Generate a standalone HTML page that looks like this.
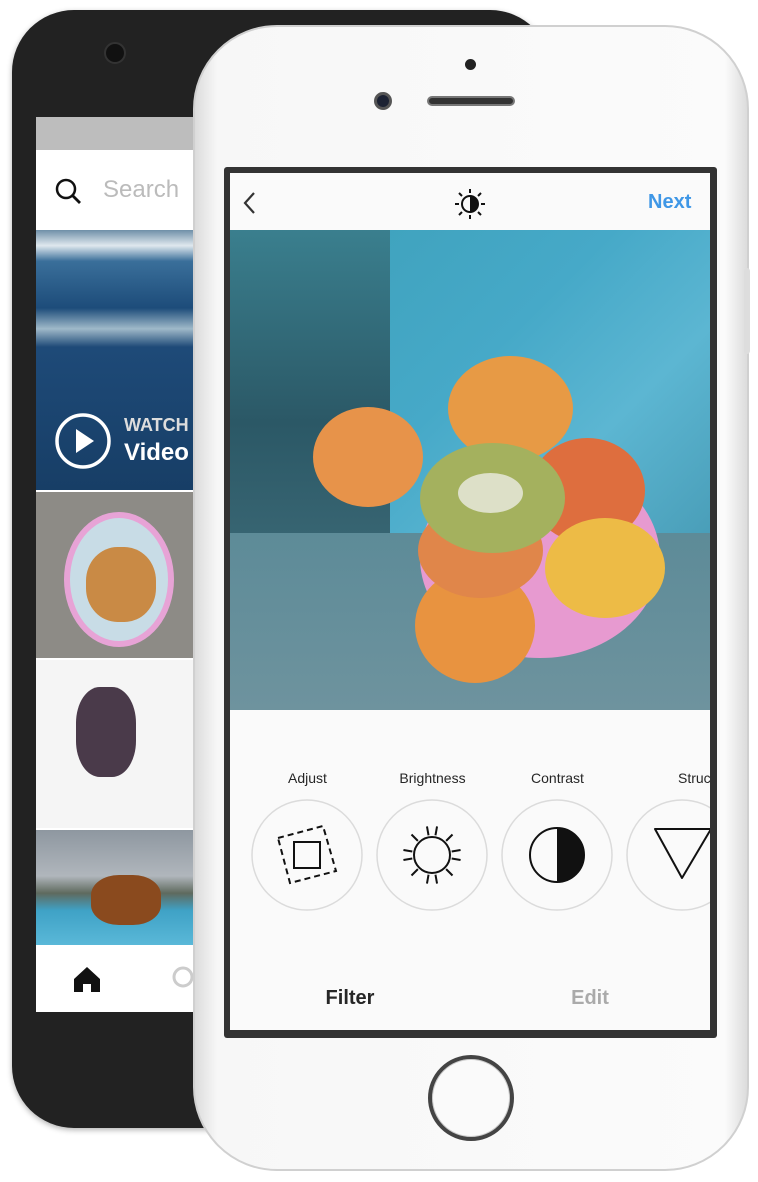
<!DOCTYPE html>
<html><head><meta charset="utf-8"><style>
*{margin:0;padding:0;box-sizing:border-box}
body{width:758px;height:1182px;background:#fff;position:relative;overflow:hidden;font-family:"Liberation Sans",sans-serif}
.a{position:absolute}
</style></head><body>
<!-- back phone -->
<div class="a" style="left:12px;top:10px;width:540px;height:1118px;border-radius:62px;background:#222;box-shadow:0 2px 6px rgba(0,0,0,.3)"></div>
<div class="a" style="left:104px;top:42px;width:22px;height:22px;border-radius:50%;background:#111;border:2px solid #333"></div>
<div class="a" style="left:36px;top:117px;width:170px;height:895px;background:#fff;overflow:hidden">
 <div class="a" style="left:0;top:0;width:170px;height:33px;background:#bdbdbd"></div>
 <svg class="a" style="left:18px;top:60px" width="30" height="30"><circle cx="12" cy="12" r="9" fill="none" stroke="#111" stroke-width="2.5"/><line x1="18.5" y1="18.5" x2="26" y2="26" stroke="#111" stroke-width="2.8"/></svg>
 <div class="a" style="left:67px;top:59px;font-size:24px;color:#bbb">Search</div>
 <div class="a" style="left:0;top:113px;width:170px;height:260px;background:linear-gradient(180deg,#6f8fa8 0%,#dfe8ee 6%,#3a6f9a 12%,#1d4c7a 30%,#9fb9c9 38%,#1e4a78 45%,#173e66 100%)"></div>
 <svg class="a" style="left:18px;top:295px" width="58" height="58"><circle cx="29" cy="29" r="26" fill="none" stroke="#fff" stroke-width="3.5"/><path d="M22 17 L40 29 L22 41Z" fill="#fff"/></svg>
 <div class="a" style="left:88px;top:298px;font-size:18px;color:#ddd;font-weight:bold">WATCH</div>
 <div class="a" style="left:88px;top:322px;font-size:24px;color:#fff;font-weight:bold">Video</div>
 <div class="a" style="left:0;top:375px;width:170px;height:166px;background:#8d8b86"></div>
 <div class="a" style="left:28px;top:395px;width:110px;height:135px;border-radius:50%;background:#c8dce6;border:6px solid #e7a3d6"></div>
 <div class="a" style="left:50px;top:430px;width:70px;height:75px;border-radius:45%;background:#c98a45"></div>
 <div class="a" style="left:0;top:543px;width:170px;height:168px;background:#f5f5f5"></div>
 <div class="a" style="left:40px;top:570px;width:60px;height:90px;background:#4a3a4a;border-radius:40%"></div>
 <div class="a" style="left:0;top:713px;width:170px;height:115px;background:linear-gradient(180deg,#8e97a0 0%,#b0b6bc 40%,#5f6a5e 55%,#3fa2c6 70%,#5ab8d8 100%)"></div>
 <div class="a" style="left:55px;top:758px;width:70px;height:50px;border-radius:40%;background:#8a4a1e"></div>
 <svg class="a" style="left:36px;top:848px" width="30" height="28"><path d="M2 14 L15 2 L28 14 V27 H19 V19 H11 V27 H2Z" fill="#111"/></svg>
 <svg class="a" style="left:133px;top:848px" width="40" height="30"><circle cx="14" cy="12" r="9" fill="none" stroke="#ccc" stroke-width="3"/></svg>
</div>
<!-- front phone -->
<div class="a" style="left:193px;top:25px;width:556px;height:1146px;border-radius:84px;background:linear-gradient(90deg,#dcdcdc,#f7f7f7 4%,#fbfbfb 96%,#dcdcdc);border:2px solid #d0d0d0"></div>
<div class="a" style="left:744px;top:268px;width:6px;height:86px;border-radius:3px;background:#ddd"></div>
<div class="a" style="left:465px;top:59px;width:11px;height:11px;border-radius:50%;background:#222"></div>
<div class="a" style="left:374px;top:92px;width:18px;height:18px;border-radius:50%;background:#1c2233;border:3px solid #555"></div>
<div class="a" style="left:427px;top:96px;width:88px;height:10px;border-radius:5px;background:#333;border:2px solid #777"></div>
<div class="a" style="left:428px;top:1055px;width:86px;height:86px;border-radius:50%;border:4px solid #444;background:#fafafa;box-shadow:inset 0 0 0 1px #ccc"></div>
<div class="a" style="left:224px;top:167px;width:493px;height:871px;background:#333;border-radius:3px"></div>
<div class="a" style="left:230px;top:173px;width:480px;height:857px;background:#fafafa;overflow:hidden">
 <svg class="a" style="left:10px;top:17px" width="20" height="26"><path d="M14 3 L5 13 L14 23" fill="none" stroke="#333" stroke-width="2.2"/></svg>
 <svg class="a" style="left:224px;top:15px" width="32" height="32"><circle cx="16" cy="16" r="8" fill="none" stroke="#111" stroke-width="2"/><path d="M16 8 A8 8 0 0 1 16 24Z" fill="#111"/><g stroke="#111" stroke-width="2"><line x1="16" y1="1" x2="16" y2="5"/><line x1="16" y1="27" x2="16" y2="31"/><line x1="1" y1="16" x2="5" y2="16"/><line x1="27" y1="16" x2="31" y2="16"/><line x1="5" y1="5" x2="8" y2="8"/><line x1="24" y1="24" x2="27" y2="27"/><line x1="27" y1="5" x2="24" y2="8"/><line x1="5" y1="27" x2="8" y2="24"/></g></svg>
 <div class="a" style="left:418px;top:18px;font-size:20px;color:#3f97e6;font-weight:bold">Next</div>
 <div class="a" style="left:0;top:57px;width:480px;height:480px;background:linear-gradient(135deg,#3c9fb8 0%,#46a9c8 40%,#5cb6d2 60%,#3a8aa3 100%)"></div>
 <div class="a" style="left:0;top:57px;width:160px;height:480px;background:linear-gradient(180deg,#3a7f8e,#2b5866 40%,#4a7884 100%)"></div>
 <div class="a" style="left:0;top:360px;width:480px;height:177px;background:linear-gradient(180deg,#5d8b98,#6e939e)"></div>
 <div class="a" style="left:190px;top:285px;width:240px;height:200px;border-radius:50%;background:#e79ad0"></div>
 <div class="a" style="left:83px;top:234px;width:110px;height:100px;border-radius:50%;background:#e7934a"></div>
 <div class="a" style="left:218px;top:183px;width:125px;height:105px;border-radius:50%;background:#e79a45"></div>
 <div class="a" style="left:300px;top:265px;width:115px;height:105px;border-radius:50%;background:#de6e3e"></div>
 <div class="a" style="left:315px;top:345px;width:120px;height:100px;border-radius:50%;background:#edbb46"></div>
 <div class="a" style="left:185px;top:395px;width:120px;height:115px;border-radius:50%;background:#e89340"></div>
 <div class="a" style="left:188px;top:330px;width:125px;height:95px;border-radius:50%;background:#e0864a"></div>
 <div class="a" style="left:190px;top:270px;width:145px;height:110px;border-radius:50%;background:#a4b15e"></div>
 <div class="a" style="left:228px;top:300px;width:65px;height:40px;border-radius:50%;background:#dde0c8"></div>
 <div class="a" style="left:0;top:537px;width:480px;height:320px;background:#fafafa"></div>
 <div class="a" style="left:0;top:597px;width:155px;text-align:center;font-size:14px;color:#262626">Adjust</div>
 <div class="a" style="left:125px;top:597px;width:155px;text-align:center;font-size:14px;color:#262626">Brightness</div>
 <div class="a" style="left:250px;top:597px;width:155px;text-align:center;font-size:14px;color:#262626">Contrast</div>
 <div class="a" style="left:448px;top:597px;font-size:14px;color:#262626;white-space:nowrap">Structure</div>
 <svg class="a" style="left:0;top:620px" width="480" height="120">
  <g fill="none" stroke="#dbdbdb" stroke-width="1.5"><circle cx="77" cy="62" r="55"/><circle cx="202" cy="62" r="55"/><circle cx="327" cy="62" r="55"/><circle cx="452" cy="62" r="55"/></g>
  <g fill="none" stroke="#111" stroke-width="2"><rect x="64" y="49" width="26" height="26"/><polygon points="48,45 93,33 106,78 60,90" stroke-dasharray="6,4"/>
  <circle cx="202" cy="62" r="18"/>
  <g stroke-width="2"><line x1="202" y1="42" x2="202" y2="33" transform="rotate(10 202 62)"/><line x1="202" y1="42" x2="202" y2="33" transform="rotate(-10 202 62)"/><line x1="202" y1="42" x2="202" y2="33" transform="rotate(45 202 62)"/><line x1="202" y1="42" x2="202" y2="33" transform="rotate(80 202 62)"/><line x1="202" y1="42" x2="202" y2="33" transform="rotate(100 202 62)"/><line x1="202" y1="42" x2="202" y2="33" transform="rotate(135 202 62)"/><line x1="202" y1="42" x2="202" y2="33" transform="rotate(170 202 62)"/><line x1="202" y1="42" x2="202" y2="33" transform="rotate(190 202 62)"/><line x1="202" y1="42" x2="202" y2="33" transform="rotate(225 202 62)"/><line x1="202" y1="42" x2="202" y2="33" transform="rotate(260 202 62)"/><line x1="202" y1="42" x2="202" y2="33" transform="rotate(280 202 62)"/><line x1="202" y1="42" x2="202" y2="33" transform="rotate(315 202 62)"/></g>
  <circle cx="327" cy="62" r="27"/><polygon points="425,36 481,36 452,85" stroke-linejoin="round"/></g>
  <path d="M327 35 A27 27 0 0 1 327 89Z" fill="#111"/>
  <circle cx="202" cy="129" r="2.5" fill="#999"/>
 </svg>
 <div class="a" style="left:0;top:814px;width:240px;text-align:center;font-size:20px;font-weight:bold;color:#262626">Filter</div>
 <div class="a" style="left:240px;top:814px;width:240px;text-align:center;font-size:20px;font-weight:bold;color:#aaa">Edit</div>
</div>
</body></html>
